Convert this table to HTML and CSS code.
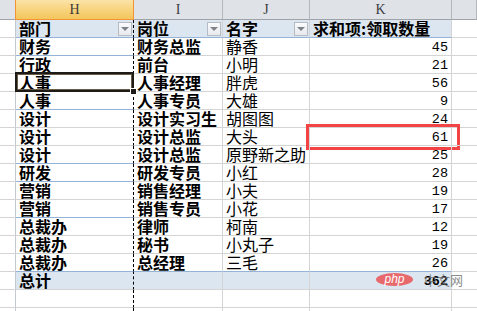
FILE: index.html
```html
<!DOCTYPE html>
<html>
<head>
<meta charset="utf-8">
<link rel="stylesheet" href="styles.css">
</head>
<body>
<div class="sheet">
  <div class="ch corner"></div>
  <div class="ch sel">H</div>
  <div class="ch">I</div>
  <div class="ch">J</div>
  <div class="ch">K</div>
  <div class="ch"></div>

  <div class="rh"></div>
  <div class="c h ph b dd">部门<span class="btn"></span></div>
  <div class="c ph b dd">岗位<span class="btn"></span></div>
  <div class="c ph b dd">名字<span class="btn"></span></div>
  <div class="c ph b">求和项:领取数量</div>
  <div class="c e"></div>

  <div class="rh"></div><div class="c h b g">财务</div><div class="c b">财务总监</div><div class="c">静香</div><div class="c n">45</div><div class="c e"></div>
  <div class="rh"></div><div class="c h b g">行政</div><div class="c b">前台</div><div class="c">小明</div><div class="c n">21</div><div class="c e"></div>
  <div class="rh"></div><div class="c h b active">人事<span class="handle"></span></div><div class="c b">人事经理</div><div class="c">胖虎</div><div class="c n">56</div><div class="c e"></div>
  <div class="rh"></div><div class="c h b g">人事</div><div class="c b">人事专员</div><div class="c">大雄</div><div class="c n">9</div><div class="c e"></div>
  <div class="rh"></div><div class="c h b">设计</div><div class="c b">设计实习生</div><div class="c">胡图图</div><div class="c n">24</div><div class="c e"></div>
  <div class="rh"></div><div class="c h b">设计</div><div class="c b">设计总监</div><div class="c">大头</div><div class="c n hl">61</div><div class="c e"></div>
  <div class="rh"></div><div class="c h b g">设计</div><div class="c b">设计总监</div><div class="c">原野新之助</div><div class="c n">25</div><div class="c e"></div>
  <div class="rh"></div><div class="c h b g">研发</div><div class="c b">研发专员</div><div class="c">小红</div><div class="c n">28</div><div class="c e"></div>
  <div class="rh"></div><div class="c h b">营销</div><div class="c b">销售经理</div><div class="c">小夫</div><div class="c n">19</div><div class="c e"></div>
  <div class="rh"></div><div class="c h b g">营销</div><div class="c b">销售专员</div><div class="c">小花</div><div class="c n">17</div><div class="c e"></div>
  <div class="rh"></div><div class="c h b">总裁办</div><div class="c b">律师</div><div class="c">柯南</div><div class="c n">12</div><div class="c e"></div>
  <div class="rh"></div><div class="c h b">总裁办</div><div class="c b">秘书</div><div class="c">小丸子</div><div class="c n">19</div><div class="c e"></div>
  <div class="rh"></div><div class="c h b g">总裁办</div><div class="c b">总经理</div><div class="c">三毛</div><div class="c n">26</div><div class="c e"></div>

  <div class="rh"></div>
  <div class="c h b tot">总计</div>
  <div class="c tot"></div>
  <div class="c tot"></div>
  <div class="c n tot bn">362<span class="wm"><span class="php">php</span><span class="cn">中文网</span></span></div>
  <div class="c e"></div>

  <div class="rh"></div><div class="c h"></div><div class="c"></div><div class="c"></div><div class="c"></div><div class="c e"></div>
  <div class="rh"></div><div class="c h"></div><div class="c"></div><div class="c"></div><div class="c"></div><div class="c e"></div>
</div>
</body>
</html>
```

FILE: styles.css
```css
html, body {
  margin: 0;
  padding: 0;
  background: #ffffff;
  overflow: hidden;
}

.sheet {
  display: grid;
  grid-template-columns: 16px 118px 89px 87px 142px 1fr;
  grid-template-rows: 20px repeat(17, 18px);
  width: 477px;
  height: 311px;
  overflow: hidden;
  font-family: "Noto Sans CJK SC", "Noto Sans", sans-serif;
  font-size: 16px;
  color: #000;
}

.ch {
  box-sizing: border-box;
  background: #dfe3e8;
  border-right: 1px solid #b4b7bb;
  border-bottom: 1px solid #9fa3a8;
  font-family: "Liberation Serif", serif;
  font-size: 14px;
  color: #3c3c3c;
  display: flex;
  align-items: flex-end;
  justify-content: center;
  padding-bottom: 1px;
  line-height: 16px;
}

.ch.corner {
  border-right: 1px solid #b4b7bb;
}

.ch.sel {
  background: linear-gradient(#fbe3a8, #f7d27a 55%, #f4c65d);
  border-right: 1px solid #f29436;
  border-bottom: 1px solid #f29436;
  border-left: 1px solid #f29436;
  margin-left: -1px;
  color: #3a3a3a;
}

.rh {
  box-sizing: border-box;
  border-right: 1px solid #c4c9d2;
  border-bottom: 1px solid #d4d4d4;
  background: #ffffff;
}

.c {
  position: relative;
  box-sizing: border-box;
  border-right: 1px solid #d4d4d4;
  border-bottom: 1px solid #d4d4d4;
  padding-left: 3px;
  line-height: 17px;
  white-space: nowrap;
  display: flex;
  align-items: center;
}

.c.h {
  border-right: 1px dashed #000;
}

.b {
  font-weight: 700;
}

.ph {
  background: #dce6f1;
  border-bottom: 1px solid #95b3d7;
}

.dd {
  justify-content: space-between;
  padding-right: 1px;
}

.btn {
  width: 14px;
  height: 14px;
  box-sizing: border-box;
  border: 1px solid #b7bcc4;
  background: linear-gradient(#fafbfc, #e6e9ee);
  display: flex;
  align-items: center;
  justify-content: center;
}

.btn::after {
  content: "";
  width: 0;
  height: 0;
  border-left: 4px solid transparent;
  border-right: 4px solid transparent;
  border-top: 4px solid #7d8288;
}

.g {
  border-bottom: 1px solid #95b3d7;
}

.n {
  justify-content: flex-end;
  padding-right: 3px;
  padding-left: 0;
  font-family: "Liberation Mono", monospace;
  font-size: 13.5px;
  padding-top: 2px;
}

.bn {
  font-weight: 700;
}

.e {
  border-right: none;
}

.tot {
  background: #dce6f1;
  border-top: 1px solid #95b3d7;
  border-bottom-color: #d4d4d4;
  margin-top: -1px;
}

.active::before {
  content: "";
  position: absolute;
  left: -1px;
  top: -2px;
  right: -1px;
  bottom: -1px;
  border: 2px solid #1d1b18;
  box-shadow: inset 0 0 0 1px #6b5a44;
  pointer-events: none;
}

.handle {
  position: absolute;
  right: -4px;
  bottom: -4px;
  width: 5px;
  height: 5px;
  background: #1d1b18;
  border: 1px solid #fff;
  z-index: 2;
}

.hl::after {
  content: "";
  position: absolute;
  left: -4px;
  right: -9px;
  top: -4px;
  bottom: -5px;
  border: 3px solid #f24444;
  pointer-events: none;
}

.wm {
  position: absolute;
  left: 66px;
  top: 0;
  display: flex;
  align-items: center;
  height: 15px;
  pointer-events: none;
}

.php {
  display: inline-block;
  width: 37px;
  height: 13px;
  border-radius: 50%;
  background: rgba(232, 88, 88, 0.88);
  color: #fff;
  font-family: "Liberation Sans", sans-serif;
  font-style: italic;
  font-size: 12px;
  line-height: 12px;
  text-align: center;
  font-weight: 400;
}

.cn {
  margin-left: 11px;
  font-family: "Noto Sans CJK SC", sans-serif;
  font-size: 13px;
  font-weight: 400;
  color: rgba(110, 110, 110, 0.8);
}
```
